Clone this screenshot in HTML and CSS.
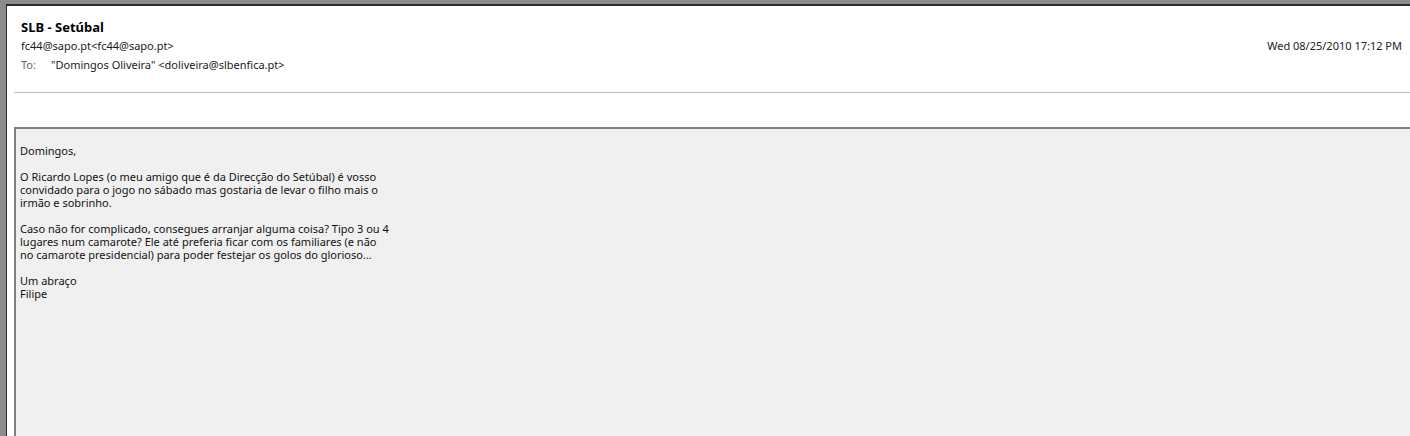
FILE: index.html
```html
<!DOCTYPE html>
<html lang="pt">
<head>
<meta charset="utf-8">
<title>SLB - Setúbal</title>
<link rel="stylesheet" href="styles.css">
</head>
<body>
<div class="frame">
  <div class="window">
    <header class="header">
      <h1 class="subject">SLB - Setúbal</h1>
      <div class="row">
        <span class="from">fc44@sapo.pt&lt;fc44@sapo.pt&gt;</span>
        <span class="date">Wed 08/25/2010 17:12 PM</span>
      </div>
      <div class="row">
        <span class="label">To:</span>
        <span class="to">"Domingos Oliveira" &lt;doliveira@slbenfica.pt&gt;</span>
      </div>
    </header>
    <div class="sep"></div>
    <div class="body">
      <p>Domingos,</p>
      <p>O Ricardo Lopes (o meu amigo que é da Direcção do Setúbal) é vosso<br>convidado para o jogo no sábado mas gostaria de levar o filho mais o<br>irmão e sobrinho.</p>
      <p>Caso não for complicado, consegues arranjar alguma coisa? Tipo 3 ou 4<br>lugares num camarote? Ele até preferia ficar com os familiares (e não<br>no camarote presidencial) para poder festejar os golos do glorioso...</p>
      <p>Um abraço<br>Filipe</p>
    </div>
  </div>
</div>
</body>
</html>
```
FILE: styles.css
```css
html, body {
  margin: 0;
  padding: 0;
  height: 100%;
  overflow: hidden;
}
body {
  font-family: "Noto Sans", "Open Sans", sans-serif;
  color: #1a1a1a;
}
.frame {
  background: #8c8c8c;
  padding: 4px 0 0 6px;
  height: 100%;
  box-sizing: border-box;
}
.window {
  background: #fff;
  border-top: 2px solid #2a2a2a;
  border-left: 1px solid #2a2a2a;
  height: 100%;
  box-sizing: border-box;
  display: flex;
  flex-direction: column;
}
.header {
  padding: 12px 8px 0 14px;
  height: 86px;
  box-sizing: border-box;
}
.subject {
  margin: 0;
  font-size: 13px;
  font-weight: bold;
  line-height: 18px;
  color: #000;
}
.row {
  display: flex;
  font-size: 11px;
  line-height: 19px;
}
.from {
  flex: 1;
}
.date {
  color: #222;
}
.label {
  color: #666;
  width: 30px;
}
.sep {
  margin-left: 7px;
  height: 1px;
  background: #bdbdbd;
}
.body {
  margin: 34px 0 0 7px;
  flex: 1;
  background: #f0f0f0;
  border-top: 2px solid #808080;
  border-left: 2px solid #808080;
  padding: 15px 4px 0 4px;
  font-size: 11px;
  line-height: 13px;
  color: #111;
}
.body p {
  margin: 0 0 13px 0;
}
```
